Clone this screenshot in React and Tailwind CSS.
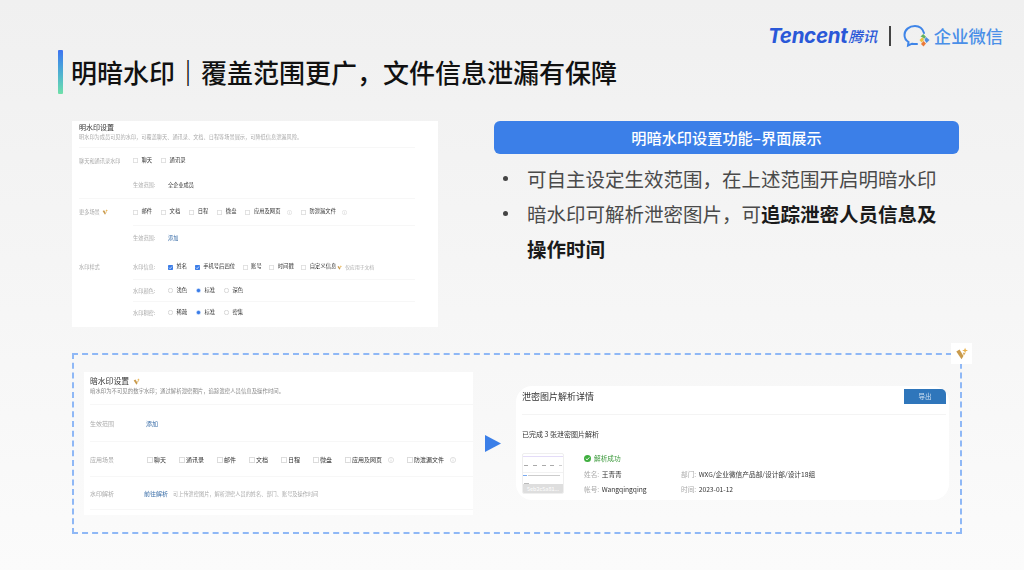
import React from "react";

const Info = ({ s = 5 }) => (
  <svg width={s} height={s} viewBox="0 0 10 10" className="shrink-0">
    <circle cx="5" cy="5" r="4.4" fill="none" stroke="#c4c4c4" strokeWidth="0.8" />
    <path d="M5 4.2V7.6M5 2.4V3.3" stroke="#c4c4c4" strokeWidth="0.9" />
  </svg>
);

const Spark = ({ s = 7 }) => (
  <svg width={s} height={s} viewBox="0 0 20 20" className="shrink-0">
    <path d="M2 7 L7 4 L13 14 L10 19 Z" fill="#c99a4b" />
    <path d="M13.5 13.5 L16 9.5 L12 8.5 Z" fill="#d8ae62" />
    <path d="M15.5 1 L16.7 4.3 L20 5.5 L16.7 6.7 L15.5 10 L14.3 6.7 L11 5.5 L14.3 4.3 Z" fill="#e8b04a" />
  </svg>
);

const Check = ({ on, s = 5 }) =>
  on ? (
    <svg width={s} height={s} viewBox="0 0 10 10" className="shrink-0">
      <rect width="10" height="10" rx="1.5" fill="#3b7de8" />
      <path d="M2 5.2 L4.2 7.4 L8 3" fill="none" stroke="#fff" strokeWidth="1.4" />
    </svg>
  ) : (
    <svg width={s} height={s} viewBox="0 0 10 10" className="shrink-0">
      <rect x="0.5" y="0.5" width="9" height="9" rx="1.5" fill="#fff" stroke="#b4b4b4" />
    </svg>
  );

const Radio = ({ on }) => (
  <svg width="5" height="5" viewBox="0 0 10 10" className="shrink-0">
    {on ? (
      <>
        <circle cx="5" cy="5" r="5" fill="#cfe0fb" />
        <circle cx="5" cy="5" r="3.4" fill="#3b7de8" />
      </>
    ) : (
      <circle cx="5" cy="5" r="4.4" fill="#fff" stroke="#b4b4b4" />
    )}
  </svg>
);

const CB = ({ t, on, info }) => (
  <div className="flex items-center gap-[3.5px] text-[5.3px] text-[#333]">
    <Check on={on} />
    <span className="whitespace-nowrap">{t}</span>
    {info && <span className="ml-[3px]"><Info /></span>}
  </div>
);

const RD = ({ t, on }) => (
  <div className="flex w-[28px] items-center gap-[3.5px] text-[5.3px] text-[#333]">
    <Radio on={on} />
    <span className="whitespace-nowrap">{t}</span>
  </div>
);

const CB2 = ({ t, info }) => (
  <div className="flex items-center gap-[1px] text-[6px] text-[#333]">
    <Check s={6} />
    <span className="whitespace-nowrap">{t}</span>
    {info && <span className="ml-[5px]"><Info s={6} /></span>}
  </div>
);

function Thumb() {
  return (
    <div className="flex h-[41px] w-[42px] shrink-0 flex-col overflow-hidden rounded-[2px] border border-[#efefef] bg-white">
      <div className="mt-[2px] h-[1px] bg-[#e4dcf8]" />
      <div className="mt-[8px] flex justify-between px-[1px]">
        <span className="h-[1px] w-[4px] bg-[#aaa]" />
        <span className="h-[1px] w-[4px] bg-[#aaa]" />
        <span className="h-[1px] w-[4px] bg-[#aaa]" />
        <span className="h-[1px] w-[4px] bg-[#aaa]" />
        <span className="h-[1px] w-[3px] bg-[#ccc]" />
      </div>
      <div className="mt-[6px] h-[1px] bg-[#f2f2f2]" />
      <div className="mt-[2px] flex gap-[1px]">
        <span className="h-[1px] w-[4px] bg-[#7aaaf0]" />
        <span className="h-[1px] w-[32px] bg-[#ccc]" />
      </div>
      <div className="mt-[7px] ml-[1px] h-[2px] w-[5px] bg-[#bbb]" />
      <div className="mt-auto flex h-[10px] items-center justify-center bg-[#dedede] text-[5.5px] text-white">5eb2c5a81...</div>
    </div>
  );
}

export default function App() {
  return (
    <div className="flex h-[570px] w-[1024px] flex-col overflow-hidden bg-gradient-to-b from-[#f0f0f0] to-[#fbfbfb] font-['Noto_Sans_CJK_SC','Noto_Sans',sans-serif]">
      {/* logo row */}
      <div className="flex h-[50px] shrink-0 items-start justify-end pt-[24px] pr-[21px]">
        <div className="flex h-[24px] items-center">
          <span className="mt-[1px] font-['Inter'] text-[20.5px] leading-none font-bold tracking-[-0.3px] text-[#2a58d8] italic">Tencent</span>
          <span className="ml-[1px] text-[14.5px] leading-none font-medium text-[#2a58d8] italic">腾讯</span>
          <span className="mx-[12px] h-[20px] w-[1.5px] bg-[#444]" />
          <svg width="28" height="24" viewBox="0 0 28 24" className="shrink-0">
            <path d="M21 9 C19.5 4 16 2 12 2 C6 2 1.5 6 1.5 11 C1.5 14 3 16.5 5.5 18 L5 21.5 L9 19.7 C10.5 20 12 20.2 14 20" fill="none" stroke="#3f85e8" strokeWidth="2" strokeLinecap="round" />
            <path d="M23 13 L26.5 16 L23.5 19 L21.5 16 Z" fill="#4f8fe0" />
            <path d="M16.5 16 L19.5 13 L21 16 L18.5 18.5 Z" fill="#f0c040" />
            <path d="M23 12.8 L20.2 10 L17.5 12.5 L20 13.5 L21 15 Z" fill="#62b262" />
            <path d="M23 19.5 L20.5 22.5 L18 20 L20.5 17 Z" fill="#ea7a3a" />
          </svg>
          <span className="ml-[3px] text-[17.3px] leading-none font-medium text-[#4a8fe8]">企业微信</span>
        </div>
      </div>

      {/* title */}
      <div className="flex h-[44px] shrink-0 items-center pl-[58px]">
        <div className="h-[44px] w-[5px] rounded-[1px] bg-gradient-to-b from-[#3f73f0] to-[#6fe0a8]" />
        <h1 className="ml-[8px] text-[26px] leading-none font-medium whitespace-nowrap text-[#111]">明暗水印<span className="font-bold text-black">｜</span>覆盖范围更广，文件信息泄漏有保障</h1>
      </div>

      {/* middle */}
      <div className="mt-[27px] flex shrink-0 pl-[72px]">
        <div className="flex h-[206px] w-[366px] shrink-0 flex-col bg-white pt-[1px] pr-[23px] pl-[7px] text-[5.2px] text-[#aaa] blur-[0.45px]">
          <div className="flex h-[10px] items-center text-[7px] text-[#333]">明水印设置</div>
          <div className="mt-[1px] flex h-[8px] items-center">明水印为成员可见的水印，可覆盖聊天、通讯录、文档、日程等场景展示，可降低信息泄漏风险。</div>
          <div className="mt-[6px] h-px bg-[#f7f7f7]" />
          <div className="flex h-[25px] items-center">
            <span className="w-[54px]">聊天和通讯录水印</span>
            <div className="flex gap-[9px]"><CB t="聊天" /><CB t="通讯录" /></div>
          </div>
          <div className="flex h-[24px] items-center pl-[54px]">
            <span className="w-[35px]">生效范围:</span>
            <span className="text-[#333]">全企业成员</span>
          </div>
          <div className="mt-[1px] h-px bg-[#f7f7f7]" />
          <div className="flex h-[26px] items-center">
            <span className="flex w-[54px] items-center gap-[2px]">更多场景<Spark s={6} /></span>
            <div className="flex gap-[9px]">
              <CB t="邮件" /><CB t="文档" /><CB t="日程" /><CB t="微盘" /><CB t="应用及网页" info /><CB t="防泄漏文件" info />
            </div>
          </div>
          <div className="ml-[54px] h-px bg-[#f7f7f7]" />
          <div className="flex h-[24px] items-center pl-[54px]">
            <span className="w-[35px]">生效范围:</span>
            <span className="text-[#3a6ea8]">添加</span>
          </div>
          <div className="mt-[4px] flex h-[25px] items-center pt-[1px]">
            <span className="w-[54px]">水印样式</span>
            <span className="w-[35px]">水印信息:</span>
            <div className="flex items-center gap-[7.6px]">
              <CB t="姓名" on /><CB t="手机号后四位" on /><CB t="账号" /><CB t="时间戳" />
              <div className="flex items-center gap-[1px]">
                <CB t="自定义信息" /><Spark s={5} />
                <span className="ml-[2px] text-[4.8px]">仅应用于文档</span>
              </div>
            </div>
          </div>
          <div className="ml-[54px] h-px bg-[#f7f7f7]" />
          <div className="flex h-[21px] items-center pl-[54px]">
            <span className="w-[35px]">水印颜色:</span>
            <RD t="浅色" /><RD t="标准" on /><RD t="深色" />
          </div>
          <div className="ml-[54px] h-px bg-[#f7f7f7]" />
          <div className="flex h-[21px] items-center pl-[54px]">
            <span className="w-[35px]">水印稠密:</span>
            <RD t="稀疏" /><RD t="标准" on /><RD t="密集" />
          </div>
        </div>

        <div className="ml-[56px] w-[465px] shrink-0">
          <div className="flex h-[33px] items-center justify-center rounded-[6px] bg-[#3b7fe8] text-[15.2px] font-medium text-white">明暗水印设置功能–界面展示</div>
          <ul className="mt-[7px] text-[19.5px] leading-[35px] text-[#4a4a4a]">
            <li className="relative pl-[33px]">
              <span className="absolute top-[15px] left-[9px] h-[4.5px] w-[4.5px] rounded-full bg-[#444]" />
              可自主设定生效范围，在上述范围开启明暗水印
            </li>
            <li className="relative w-[444px] pl-[33px]">
              <span className="absolute top-[15px] left-[9px] h-[4.5px] w-[4.5px] rounded-full bg-[#444]" />
              暗水印可解析泄密图片，可<b className="font-bold text-[#1a1a1a]">追踪泄密人员信息及操作时间</b>
            </li>
          </ul>
        </div>
      </div>

      {/* bottom */}
      <div className="relative mt-[26px] ml-[72px] flex h-[181px] w-[890px] shrink-0 items-start border-2 border-dashed border-[#8fb8f6] pt-[17px] pl-[10px]">
        <div className="flex h-[143px] w-[389px] shrink-0 flex-col bg-white pl-[6px] text-[6px] text-[#aaa] blur-[0.45px]">
          <div className="mt-[3px] flex h-[12px] items-center gap-[4px] text-[7.8px] text-[#333]">暗水印设置<Spark s={7} /></div>
          <div className="flex h-[9px] items-center text-[5.4px] text-[#888]">暗水印为不可见的数字水印；通过解析泄密图片，追踪泄密人员信息及操作时间。</div>
          <div className="mt-[8px] h-px bg-[#f7f7f7]" />
          <div className="flex h-[36px] items-center">
            <span className="w-[56px]">生效范围</span>
            <span className="text-[#3a6ea8]">添加</span>
          </div>
          <div className="h-px bg-[#f7f7f7]" />
          <div className="flex h-[34px] items-center pt-[1px]">
            <span className="w-[57px]">应用场景</span>
            <div className="flex gap-[13px]">
              <CB2 t="聊天" /><CB2 t="通讯录" /><CB2 t="邮件" /><CB2 t="文档" /><CB2 t="日程" /><CB2 t="微盘" /><CB2 t="应用及网页" info /><CB2 t="防泄漏文件" info />
            </div>
          </div>
          <div className="h-px bg-[#f7f7f7]" />
          <div className="flex h-[32px] items-center pt-[1px]">
            <span className="w-[54px]">水印解析</span>
            <span className="text-[#3a6ea8]">前往解析</span>
            <span className="ml-[5px] text-[5.2px]">可上传泄密图片，解析泄密人员的姓名、部门、账号及操作时间</span>
          </div>
          <div className="h-px bg-[#f7f7f7]" />
        </div>

        <svg width="16" height="17" viewBox="0 0 16 17" className="mt-[63px] ml-[12px] shrink-0">
          <path d="M0 0 L16 8.5 L0 17 Z" fill="#3b7fe8" />
        </svg>

        <div className="mt-[14px] ml-[15px] flex h-[114px] w-[433px] shrink-0 flex-col rounded-[16px] bg-white pr-[3px] pl-[6px] blur-[0.35px]">
          <div className="flex h-[28px] items-start justify-between pt-[3px]">
            <span className="flex h-[15px] items-center text-[9px] text-[#333]">泄密图片解析详情</span>
            <span className="flex h-[15px] w-[42px] items-center justify-center rounded-tr-[5px] bg-[#2f76bb] text-[6.5px] text-[#cfe0f2]">导出</span>
          </div>
          <div className="h-px bg-[#f4f4f4]" />
          <div className="mt-[14px] flex h-[10px] items-center text-[7px] text-[#333]">已完成 3 张泄密图片解析</div>
          <div className="mt-[14px] flex">
            <Thumb />
            <div className="ml-[20px] flex flex-col text-[6.7px] text-[#aaa]">
              <div className="flex h-[10px] items-center gap-[3px] text-[#3d9a3d]">
                <svg width="7" height="7" viewBox="0 0 10 10"><circle cx="5" cy="5" r="5" fill="#3fae3f" /><path d="M2.5 5.2 L4.4 7 L7.6 3.4" fill="none" stroke="#fff" strokeWidth="1.3" /></svg>
                解析成功
              </div>
              <div className="mt-[3.5px] flex h-[15px] items-center">
                <span className="w-[97px]">姓名:<span className="ml-[2.5px] text-[#333]">王青青</span></span>
                <span>部门:<span className="ml-[2.5px] text-[#333]">WXG/企业微信产品部/设计部/设计18组</span></span>
              </div>
              <div className="flex h-[15px] items-center">
                <span className="w-[97px]">帐号:<span className="ml-[2.5px] text-[#333]">Wangqingqing</span></span>
                <span>时间:<span className="ml-[2.5px] text-[#333]">2023-01-12</span></span>
              </div>
            </div>
          </div>
        </div>

        <div className="absolute top-[-12px] right-[-12px] flex h-[21px] w-[21px] items-center justify-center bg-white">
          <Spark s={13} />
        </div>
      </div>
    </div>
  );
}
